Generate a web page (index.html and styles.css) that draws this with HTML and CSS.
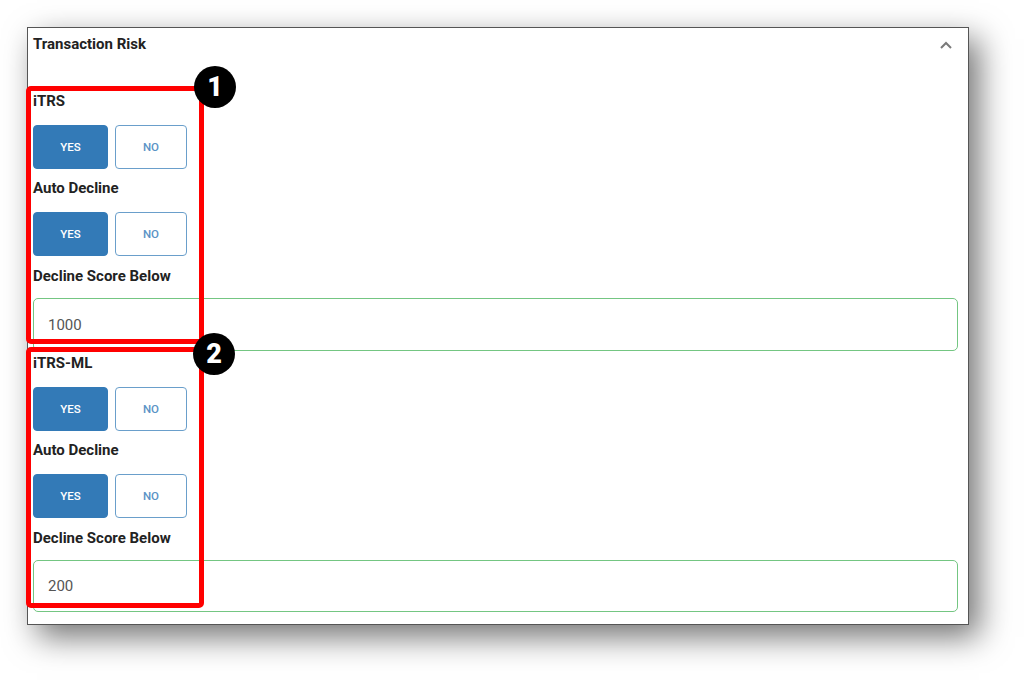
FILE: index.html
```html
<!DOCTYPE html>
<html lang="en">
<head>
    <meta charset="UTF-8">
    <meta name="viewport" content="width=device-width, initial-scale=1.0">
    <title>Transaction Risk</title>
    <link rel="stylesheet" href="styles.css">
</head>
<body>
    <div class="panel">
        <div class="panel-header">
            <span class="panel-title">Transaction Risk</span>
            <svg class="chevron" width="14" height="10" viewBox="0 0 14 10">
                <path d="M2 8 L7 3 L12 8" fill="none" stroke="#7a7a7a" stroke-width="2"/>
            </svg>
        </div>

        <div class="group">
            <div class="label">iTRS</div>
            <div class="toggle">
                <button class="btn btn-yes">YES</button>
                <button class="btn btn-no">NO</button>
            </div>
            <div class="label">Auto Decline</div>
            <div class="toggle">
                <button class="btn btn-yes">YES</button>
                <button class="btn btn-no">NO</button>
            </div>
            <div class="label">Decline Score Below</div>
            <input type="text" class="input-box" value="1000">
        </div>

        <div class="group">
            <div class="label">iTRS-ML</div>
            <div class="toggle">
                <button class="btn btn-yes">YES</button>
                <button class="btn btn-no">NO</button>
            </div>
            <div class="label">Auto Decline</div>
            <div class="toggle">
                <button class="btn btn-yes">YES</button>
                <button class="btn btn-no">NO</button>
            </div>
            <div class="label">Decline Score Below</div>
            <input type="text" class="input-box" value="200">
        </div>

        <!-- annotations -->
        <div class="mark mark-1"></div>
        <div class="mark mark-2"></div>
        <div class="badge badge-1">1</div>
        <div class="badge badge-2">2</div>
    </div>
</body>
</html>
```

FILE: styles.css
```css
html {
    background: #fff;
}
body {
    font-family: Roboto, "Liberation Sans", Arial, sans-serif;
    background: #fff;
    margin: 0;
    padding: 27px;
    min-height: 100vh;
    box-sizing: border-box;
}
.panel {
    position: relative;
    width: 925px;
    height: 590px;
    background: #fff;
    border: 1px solid #555;
    box-shadow: 10px 12px 30px rgba(0, 0, 0, 0.55);
    padding: 6px 10px 0 5px;
    box-sizing: content-box;
}
.panel-header {
    display: flex;
    justify-content: space-between;
    align-items: center;
    height: 20px;
    margin-bottom: 37px;
}
.panel-title {
    font-size: 15px;
    font-weight: bold;
    color: #222;
}
.chevron {
    margin-right: 5px;
    margin-top: 2px;
}
.group {
    margin-bottom: 2px;
}
.label {
    font-size: 15px;
    font-weight: bold;
    color: #222;
    line-height: 20px;
    margin-bottom: 14px;
}
.toggle {
    display: flex;
    gap: 7px;
    margin-bottom: 9px;
}
.btn {
    height: 44px;
    font-family: inherit;
    font-size: 11.5px;
    font-weight: 500;
    border-radius: 4px;
    padding: 0;
    cursor: pointer;
}
.btn-yes {
    width: 75px;
    background: #337ab7;
    border: 1px solid #337ab7;
    color: #fff;
}
.btn-no {
    width: 72px;
    background: #fff;
    border: 1px solid #6a9fcb;
    color: #5b93c6;
}
.toggle + .label + .toggle {
    margin-bottom: 10px;
}
.input-box {
    display: block;
    width: 925px;
    height: 53px;
    box-sizing: border-box;
    margin-top: -2px;
    border: 1px solid #74c682;
    border-radius: 5px;
    padding: 0 14px;
    font-family: inherit;
    font-size: 15px;
    color: #555;
    outline: none;
}
.group + .group .input-box {
    height: 52px;
}
.mark {
    position: absolute;
    left: -2px;
    width: 168px;
    border: 5px solid #f00;
    border-radius: 5px;
}
.mark-1 {
    top: 58px;
    height: 248px;
}
.mark-2 {
    top: 319px;
    height: 251px;
}
.badge {
    position: absolute;
    width: 42px;
    height: 42px;
    border-radius: 50%;
    background: #000;
    color: #fff;
    font-size: 27px;
    font-weight: 900;
    line-height: 42px;
    text-align: center;
}
.badge-1 {
    left: 166px;
    top: 38px;
}
.badge-2 {
    left: 165px;
    top: 305px;
}
```
